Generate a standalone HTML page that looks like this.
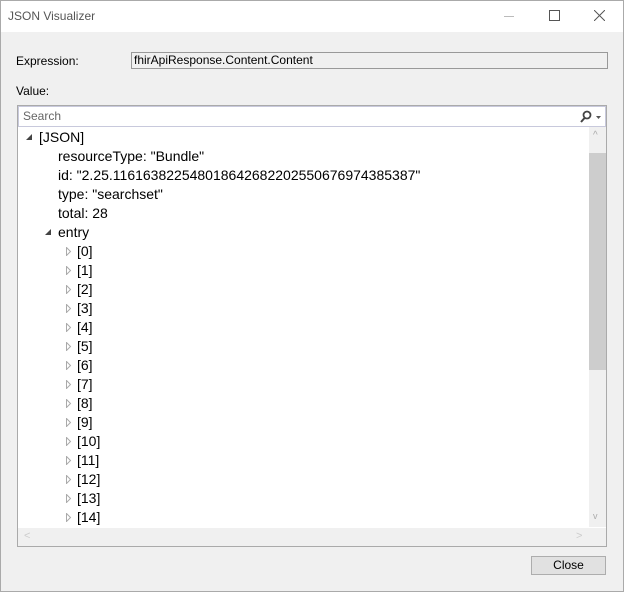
<!DOCTYPE html>
<html><head><style>
body{margin:0;width:624px;height:592px;overflow:hidden;font-family:"Liberation Sans",sans-serif;font-size:12px;color:#000}
.win{position:absolute;left:0;top:0;width:622px;height:590px;border:1px solid #aaa;background:#f0f0f0}
.title{position:absolute;left:0;top:0;width:622px;height:31px;background:#fff}
.abs{position:absolute}
.row{position:absolute;height:19px;line-height:19px;white-space:nowrap;font-size:14px}
</style></head><body>
<div class="win">
<div class="title">
<div class="abs" style="left:7px;top:8px;color:#555">JSON Visualizer</div>
<div class="abs" style="left:503px;top:15px;width:10px;height:1px;background:#bbb"></div>
<div class="abs" style="left:548px;top:9px;width:9px;height:9px;border:1px solid #555"></div>
<svg class="abs" style="left:593px;top:9px" width="11" height="11"><path d="M0 0L11 11M11 0L0 11" stroke="#555" stroke-width="1"/></svg>
</div>
<div class="abs" style="left:15px;top:53px">Expression:</div>
<div class="abs" style="left:130px;top:51px;width:473px;height:15px;border:1px solid #999;background:#f0f0f0;line-height:15px;padding-left:2px">fhirApiResponse.Content.Content</div>
<div class="abs" style="left:15px;top:83px">Value:</div>
<div class="abs" style="left:16px;top:104px;width:588px;height:440px;border:1px solid #aaa;background:#fff;overflow:hidden">
 <div class="abs" style="left:0;top:0;border:1px solid #c8c9dc;background:#fff;color:#666;line-height:19px;padding-left:4px;box-sizing:border-box;width:588px;height:21px">Search</div>
 <svg class="abs" style="left:560px;top:4px" width="26" height="14"><circle cx="9" cy="5" r="3.5" fill="none" stroke="#444" stroke-width="1.8"/><path d="M7 7.5L3 12" stroke="#444" stroke-width="2"/><path d="M18 6h5l-2.5 3z" fill="#555"/></svg>
 <div class="abs" style="left:571px;top:21px;width:17px;height:400px;background:#f0f0f0"></div>
 <div class="abs" style="left:571px;top:47px;width:17px;height:217px;background:#cdcdcd"></div>
 <div class="abs" style="left:575px;top:24px;color:#aaa;font-size:10px">^</div>
 <div class="abs" style="left:575px;top:405px;color:#aaa;font-size:9px">v</div>
 <div class="abs" style="left:0;top:422px;width:588px;height:18px;background:#f0f0f0"></div>
 <div class="abs" style="left:6px;top:424px;color:#ccc;font-size:11px">&lt;</div>
 <div class="abs" style="left:558px;top:424px;color:#ccc;font-size:11px">&gt;</div>
 <div id="t"></div>
</div>
<div class="abs" style="left:530px;top:555px;width:73px;height:17px;border:1px solid #adadad;background:#e1e1e1;text-align:center;line-height:17px">Close</div>
</div>
<script>
var t=document.getElementById('t'),h='';
function r(y,x,txt,tri){h+='<div class="row" style="left:'+x+'px;top:'+y+'px">'+txt+'</div>';
if(tri=='d')h+='<svg class="abs" style="left:'+(x-13)+'px;top:'+(y+6)+'px" width="7" height="7"><path d="M6 0L6 6L0 6z" fill="#444"/></svg>';
if(tri=='r')h+='<svg class="abs" style="left:'+(x-11)+'px;top:'+(y+5)+'px" width="6" height="9"><path d="M0.5 0.5L4.5 4.5L0.5 8.5z" fill="none" stroke="#aaa"/></svg>';}
var y=22;
r(y,21,'[JSON]','d');y+=19;
['resourceType: "Bundle"','id: "2.25.116163822548018642682202550676974385387"','type: "searchset"','total: 28'].forEach(function(s){r(y,40,s);y+=19});
r(y,40,'entry','d');y+=19;
for(var i=0;i<15;i++){r(y,59,'['+i+']','r');y+=19}
t.outerHTML=h;
</script>
</body></html>
